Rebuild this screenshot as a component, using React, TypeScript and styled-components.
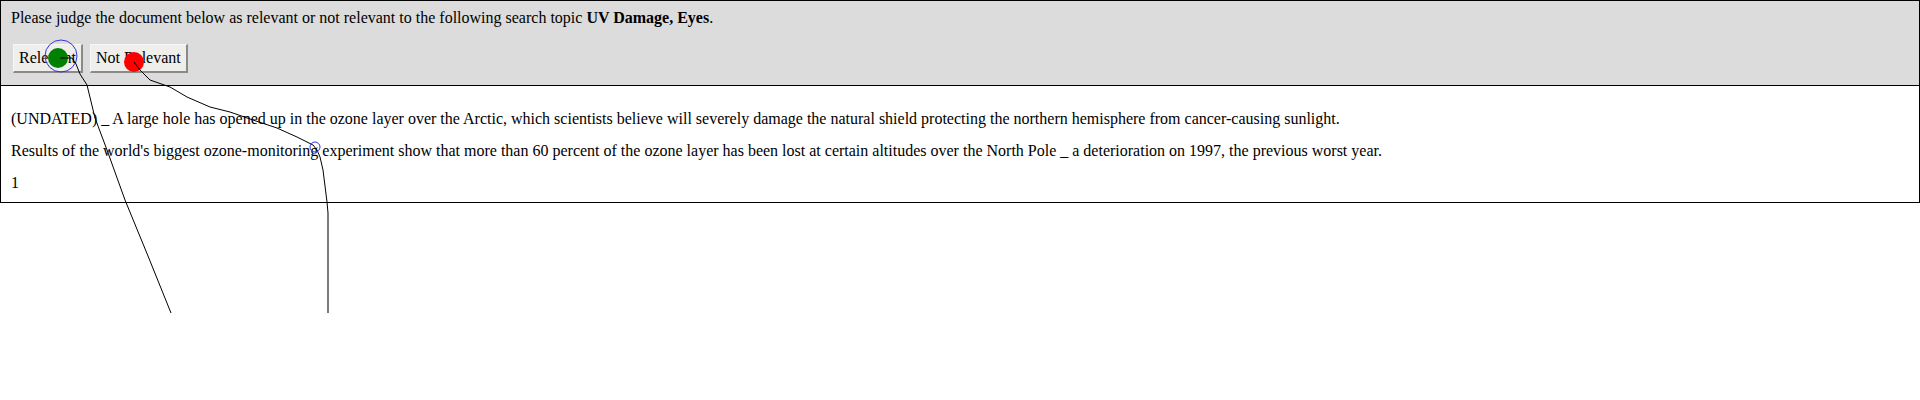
import React from "react";
import styled, { createGlobalStyle } from "styled-components";

const Global = createGlobalStyle`
  html, body { margin: 0; padding: 0; background: #fff; }
  body { font-family: "Liberation Serif", "Times New Roman", serif; font-size: 16px; color: #000; }
  * { box-sizing: border-box; }
`;

const Page = styled.div`
  position: relative;
  width: 1920px;
  height: 400px;
`;

const Header = styled.div`
  background: #dcdcdc;
  border: 1px solid #000;
  padding: 8px 10px 12px 10px;
  display: flex;
  flex-direction: column;
  gap: 17px;
`;

const Prompt = styled.div`
  line-height: 18px;
`;

const Buttons = styled.div`
  display: flex;
  gap: 7px;
  padding-left: 2px;
`;

const JudgeButton = styled.button`
  font-family: "Liberation Serif", "Times New Roman", serif;
  font-size: 16px;
  line-height: 18px;
  color: #000;
  background: #efeeea;
  border-style: solid;
  border-width: 1px 2px 2px 1px;
  border-color: #f8f8f8 #8a8a8a #8a8a8a #f8f8f8;
  padding: 4px 5px 4px 5px;
  margin: 0;
  cursor: pointer;
`;

const Doc = styled.div`
  border: 1px solid #000;
  border-top: none;
  padding: 24px 10px 10px 10px;
  display: flex;
  flex-direction: column;
  gap: 14px;
`;

const Para = styled.p`
  margin: 0;
  line-height: 18px;
`;

const Trail = styled.svg`
  position: absolute;
  left: 0;
  top: 0;
  pointer-events: none;
`;

export default function App() {
  return (
    <Page>
      <Global />
      <Header>
        <Prompt>
          Please judge the document below as relevant or not relevant to the following search topic{" "}
          <b>UV Damage, Eyes</b>.
        </Prompt>
        <Buttons>
          <JudgeButton>Relevant</JudgeButton>
          <JudgeButton>Not Relevant</JudgeButton>
        </Buttons>
      </Header>
      <Doc>
        <Para>
          (UNDATED) _ A large hole has opened up in the ozone layer over the Arctic, which scientists believe will severely damage the natural shield protecting the northern hemisphere from cancer-causing sunlight.
        </Para>
        <Para>
          Results of the world's biggest ozone-monitoring experiment show that more than 60 percent of the ozone layer has been lost at certain altitudes over the North Pole _ a deterioration on 1997, the previous worst year.
        </Para>
        <Para>1</Para>
      </Doc>
      <Trail width="1920" height="400" viewBox="0 0 1920 400">
        <circle cx="58" cy="58" r="10" fill="#008000" />
        <circle cx="61" cy="56" r="16" fill="none" stroke="#3333dd" strokeWidth="1" />
        <polyline
          points="60,58 72,58 76,64 80,74 87,85 95,118 107,150 125,200 148,256 171,313"
          fill="none"
          stroke="#000"
          strokeWidth="1"
        />
        <circle cx="134" cy="62" r="10" fill="#ff0000" />
        <polyline
          points="134,62 140,70 150,80 170,87 187,97 210,107 230,112 253,120 277,128 297,137 313,145 317,150 320,157 323,170 327,202 328,213"
          fill="none"
          stroke="#000"
          strokeWidth="1"
        />
        <circle cx="315" cy="147" r="5" fill="none" stroke="#3333dd" strokeWidth="1" />
        <line x1="328" y1="213" x2="328" y2="313" stroke="#7a7a7a" strokeWidth="2" />
      </Trail>
    </Page>
  );
}
